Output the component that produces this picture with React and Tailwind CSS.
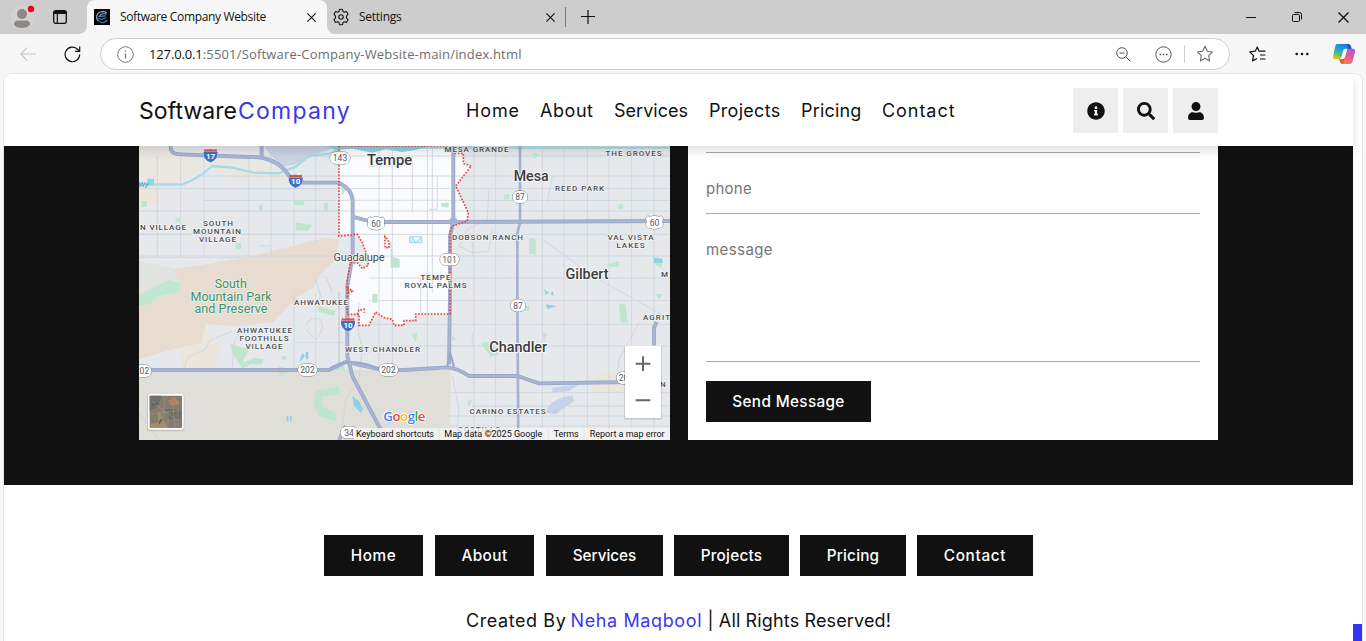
import React from "react";
import { FaInfoCircle, FaSearch, FaUser } from "react-icons/fa";

const ui = { fill: "none", stroke: "#111", strokeWidth: 1.1, strokeLinecap: "round", strokeLinejoin: "round" };

function Favicon() {
  return (
    <svg width="16" height="16" viewBox="0 0 16 16" className="shrink-0">
      <rect width="16" height="16" fill="#050507" />
      <path d="M12.5 4.2C10.5 1.6 5 2 3.3 5.2 2 8 3 10.600 4.600 12" fill="none" stroke="#8aa3bd" strokeWidth="1.300" />
      <path d="M12.600 5.200C10 4 6.500 5 5.200 7.400L11.800 6.800" fill="none" stroke="#5d88b5" strokeWidth="1.200" />
      <path d="M4.500 9C6 11.500 9 10.500 12.500 8.500M5 12.600C8 14.500 12 13.600 13.300 10.800" fill="none" stroke="#3f76ae" strokeWidth="1.200" />
    </svg>
  );
}

function GearIcon() {
  return (
    <svg width="18" height="18" viewBox="0 0 18 18" {...ui} className="shrink-0">
      <path d="M7.400 1.500Q9 1 10.600 1.500L11 3.600 12.300 4.300 14.400 3.600Q15.600 4.800 16 6.300L14.500 8V10L16 11.700Q15.600 13.200 14.400 14.400L12.300 13.700 11 14.400 10.600 16.500Q9 17 7.400 16.500L7 14.400 5.700 13.700 3.600 14.400Q2.400 13.200 2 11.700L3.500 10V8L2 6.300Q2.400 4.800 3.600 3.600L5.700 4.300 7 3.600Z" />
      <circle cx="9" cy="9" r="2.200" />
    </svg>
  );
}

function Close({ size = 9 }) {
  return (
    <svg width={size} height={size} viewBox="0 0 9 9" fill="none" stroke="#111" strokeWidth="1.100">
      <path d="M.4.4l8.200 8.200M8.600.4L.4 8.600" />
    </svg>
  );
}

function Star({ className = "", stroke = "#666" }) {
  return (
    <svg width="18" height="18" viewBox="0 0 18 18" className={className} fill="none" stroke={stroke} strokeWidth="1.050" strokeLinejoin="round">
      <path d="M9 1.300l2.300 4.900 5.200.7-3.800 3.700.9 5.300L9 13.300l-4.600 2.600.9-5.300L1.500 6.900l5.200-.7z" />
    </svg>
  );
}

function Copilot() {
  return (
    <svg width="24" height="22" viewBox="0 0 24 22" className="shrink-0">
      <defs>
        <linearGradient id="cpA" x1=".6" y1="0" x2=".2" y2="1">
          <stop offset="0" stopColor="#1b7fe0" />
          <stop offset=".4" stopColor="#1fa8d8" />
          <stop offset=".7" stopColor="#6cc05a" />
          <stop offset="1" stopColor="#f2c21b" />
        </linearGradient>
        <linearGradient id="cpB" x1=".8" y1="0" x2=".2" y2="1">
          <stop offset="0" stopColor="#a45be8" />
          <stop offset=".5" stopColor="#ee5a8c" />
          <stop offset="1" stopColor="#f98a3c" />
        </linearGradient>
      </defs>
      <path d="M12 1h4.500c1.500 0 2 1 2.400 2.300L20 6.500h-4.500c-1.500 0-2-1-2.300-2z" fill="#174bb8" />
      <path d="M4.800 1h8.500c1.600 0 2.200 1 2.600 2.400l.6 2.400h-2.700c-1.500 0-2.300.9-2.700 2.200L9.400 14c-.6 1.800-1.600 2.300-3 2.300H3.200C1 16.300.6 14.500 1.200 12.500l2-9C3.600 1.900 4 1 4.800 1z" fill="url(#cpA)" />
      <path d="M7 16.300h3.200c1.500 0 2.300-.9 2.700-2.200L14.600 8c.6-1.800 1.600-2.200 3-2.200h3.200c2.200 0 2.700 1.700 2.100 3.700l-2.200 8.500c-.5 2-1.400 3-3.200 3H11c-1.500 0-2.300-.8-2.700-2.200z" fill="url(#cpB)" />
      <path d="M10.300 13.600L12.600 6.900Q13 5.800 14 5.800H15.400L12.800 13.400Q12.500 14.600 11.400 14.600H9.700Z" fill="#f7f7f7" />
      <path d="M7 16.300h3.200c1 0 1.800-.5 2.300-1.300L11 21c-1.500 0-2.300-.8-2.700-2.200z" fill="#e8553c" />
    </svg>
  );
}

function TabBar() {
  return (
    <div className="flex h-[34px] w-full bg-[#cdcdcd] font-['Open_Sans',sans-serif] text-[12px] text-[#111]">
      <div className="h-[34px] w-[87px] bg-[#f7f7f7]">
        <div className="flex h-[34px] rounded-br-lg bg-[#cdcdcd] pt-[5px] pl-[10px]">
          <svg width="26" height="26" viewBox="0 0 26 26">
            <circle cx="12.500" cy="12.500" r="12" fill="#d4d2d0" />
            <circle cx="12" cy="9" r="5" fill="#8c8a88" />
            <path d="M4 19.500Q4 15.500 8 15.500H16Q20 15.500 20 19.500 18 23 12 23T4 19.500Z" fill="#8c8a88" />
            <circle cx="21" cy="4" r="3.200" fill="#e30613" />
          </svg>
          <svg width="14" height="14" viewBox="0 0 14 14" className="mt-[5px] ml-[17px]">
            <rect x=".7" y=".7" width="12.600" height="12.600" rx="2" fill="none" stroke="#111" strokeWidth="1.300" />
            <path d="M1 1H13V4H1Z" fill="#111" />
            <path d="M4.300 4V13" stroke="#111" strokeWidth="1.200" />
          </svg>
        </div>
      </div>
      <div className="flex h-[34px] w-[240px] items-center rounded-t-lg bg-[#f7f7f7] pl-[7px]">
        <Favicon />
        <span className="ml-[10px] w-[187px] whitespace-nowrap tracking-[-0.34px]">Software Company Website</span>
        <Close />
      </div>
      <div className="w-[239px] bg-[#f7f7f7]">
        <div className="flex h-[34px] items-center rounded-bl-lg bg-[#cdcdcd] pl-[5px]">
          <GearIcon />
          <span className="ml-[9px] w-[187px] tracking-[-0.25px]">Settings</span>
          <Close />
        </div>
      </div>
      <div className="mt-[7px] -ml-px h-5 w-px bg-[#777]" />
      <svg width="14" height="14" viewBox="0 0 14 14" className="mt-[10px] ml-[15px]" stroke="#111" strokeWidth="1.200">
        <path d="M7 0V14M0 6.500H14" />
      </svg>
      <div className="ml-auto flex items-center gap-[36px] pr-[17px]">
        <svg width="10" height="10" viewBox="0 0 10 10" stroke="#111"><path d="M0 5.500H10" /></svg>
        <svg width="10" height="10" viewBox="0 0 10 10" fill="none" stroke="#111">
          <rect x=".5" y="2.500" width="7" height="7" rx="1" />
          <path d="M2.500.5H7.500Q9.500.5 9.500 2.500V7.500" />
        </svg>
        <Close size={11} />
      </div>
    </div>
  );
}

function AddressBar() {
  return (
    <div className="flex h-[39px] w-full items-center bg-[#f7f7f7] pt-[1px] font-['Open_Sans',sans-serif]">
      <svg width="16" height="14" viewBox="0 0 16 14" className="ml-5" fill="none" stroke="#c6c6c6" strokeWidth="1.200">
        <path d="M16 7H1M7 .7L.8 7 7 13.300" />
      </svg>
      <svg width="17" height="17" viewBox="0 0 17 17" className="ml-[28px]" fill="none" stroke="#111" strokeWidth="1.200">
        <path d="M15.700 8.500A7.300 7.300 0 1 1 13.800 3.500L15.500 5.200M15.700.5V5.300H11" />
      </svg>
      <div className="ml-[19px] flex h-8 w-[1130px] items-center rounded-full border border-[#cfcfcf] bg-white">
        <svg width="17" height="17" viewBox="0 0 17 17" className="ml-4" fill="none" stroke="#777" strokeWidth="1">
          <circle cx="8.500" cy="8.500" r="7.800" />
          <path d="M8.500 7.500V12.500M8.500 4.500V5.700" strokeWidth="1.300" />
        </svg>
        <span className="ml-[15px] pt-px text-[13px] whitespace-nowrap text-[#111] tracking-[-0.13px]">127.0.0.1</span>
        <span className="w-[583px] pt-px text-[13px] whitespace-nowrap text-[#6d6d6d] tracking-[0.18px]">:5501/Software-Company-Website-main/index.html</span>
        <div className="mr-[15px] ml-auto flex items-center">
          <svg width="15" height="15" viewBox="0 0 15 15" fill="none" stroke="#555" strokeWidth="1">
            <circle cx="6" cy="6" r="5.300" />
            <path d="M10 10L14.500 14.500M3.500 6H8.500" />
          </svg>
          <svg width="17" height="17" viewBox="0 0 17 17" className="ml-[24px]" fill="none" stroke="#555">
            <circle cx="8.500" cy="8.500" r="7.700" />
            <path d="M4.500 8.500h1.600M7.700 8.500h1.600M10.900 8.500h1.600" strokeWidth="1.500" />
          </svg>
          <div className="ml-[12px] h-[18px] w-px bg-[#cfcfcf]" />
          <Star className="ml-[11px]" />
        </div>
      </div>
      <svg width="18" height="18" viewBox="0 0 18 18" className="ml-[19px]" fill="none" stroke="#111" strokeWidth="1.200" strokeLinejoin="round">
        <path d="M10 6.200L8.300 2 6.200 6.200.8 6.900 4.500 10.600 3.500 15.900 8 13.500M10 6.200H16.500M11 10H16.500M11 14H16.500" />
      </svg>
      <svg width="14" height="4" viewBox="0 0 14 4" className="ml-[28px]" fill="#111">
        <circle cx="1.700" cy="2" r="1.300" /><circle cx="7" cy="2" r="1.300" /><circle cx="12.300" cy="2" r="1.300" />
      </svg>
      <div className="ml-[23px]"><Copilot /></div>
    </div>
  );
}

function IconButton({ children }) {
  return <button className="flex size-[45px] items-center justify-center bg-[#eee] text-[18px] text-[#111]">{children}</button>;
}

function Header() {
  return (
    <header className="relative z-10 flex h-[72px] w-full shrink-0 items-center bg-white pt-px pr-[135px] pl-[135px] text-[#111] shadow-[0_5px_10px_rgba(0,0,0,0.12)]">
      <div className="flex w-[327px] text-[23px] leading-[30px]">
        <span className="w-[99px] tracking-[0.06px]">Software</span>
        <span className="tracking-[1.25px] text-[#3d38ec]">Company</span>
      </div>
      <nav className="flex text-[18px] leading-6">
        <a className="w-[74px] tracking-[0.87px]">Home</a>
        <a className="w-[74px] tracking-[0.55px]">About</a>
        <a className="w-[95px] tracking-[0.02px]">Services</a>
        <a className="w-[92px] tracking-[0.3px]">Projects</a>
        <a className="w-[81px] tracking-[0.18px]">Pricing</a>
        <a className="tracking-[0.95px]">Contact</a>
      </nav>
      <div className="ml-auto flex gap-[5px]">
        <IconButton><FaInfoCircle /></IconButton>
        <IconButton><FaSearch /></IconButton>
        <IconButton><FaUser /></IconButton>
      </div>
    </header>
  );
}

const placeLabels = [
  ["MESA GRANDE", 476.500, 152, 64], ["THE GROVES", 633.500, 155.500, 56], ["REED PARK", 579.500, 190.500, 49],
  ["DOBSON RANCH", 487.500, 240, 71], ["VAL VISTA", 630.500, 240, 46], ["LAKES", 630.500, 248, 28],
  ["TEMPE", 435.500, 279.500, 30], ["ROYAL PALMS", 435.500, 287.500, 62], ["SOUTH", 218, 225.500, 30],
  ["MOUNTAIN", 217, 233.500, 48], ["VILLAGE", 217.500, 241.500, 37], ["N VILLAGE", 163, 230, 46],
  ["AHWATUKEE", 321, 304.500, 54], ["AHWATUKEE", 264.500, 332.500, 55], ["FOOTHILLS", 264, 340.500, 49],
  ["VILLAGE", 264, 348.500, 37], ["WEST CHANDLER", 382.500, 351.500, 75], ["CARINO ESTATES", 507.500, 414, 76],
  ["COSTILLO", 479, 432, 43], ["AGRIT", 656.500, 319.500, 27], ["MO", 669, 277, 16], ["N T", 668, 387, 16],
];
const cityLabels = [["Tempe", 389.500, 165, 45], ["Mesa", 531.200, 181, 35], ["Gilbert", 587, 279, 43], ["Chandler", 518.200, 352, 58]];
const routes = [["143", 340, 158, 20], ["87", 520, 197, 15], ["101", 449.500, 259.500, 19], ["87", 518, 305.500, 15], ["202", 142, 371, 19], ["202", 307.500, 370, 19], ["202", 388.500, 370, 19], ["202", 626, 378, 19], ["34", 349, 432.500, 17]];
const roadsV = [55, 125, 195, 330, 396, 465, 530, 720, 760, 865, 1005, 1070, 1210, 1275, 1345, 1410, 1478, 1545];
const roadsH = [30, 90, 128, 163, 195, 265, 330, 396, 464, 535, 600, 740, 810];
const city = "M600 0V270L655 265 670 290 685 330 688 358 670 368 655 350H635L625 400V505H660V538H690L710 498 735 515 760 520 765 538H795V524H830V504H933V260L940 240 985 225 988 200 950 120 997 60 973 52V22H943V0Z";
const freeways = "M95 0Q92 25 125 25L330 33Q400 30 440 75 460 110 500 110H600Q640 130 641 165V330L625 420V630L640 690 725 850M368 0V33M640 212L700 228H943L1593 225M943 0V228L933 270V444L930 655M0 672H570L620 648 730 672H795L925 664Q960 668 990 690H1135L1200 712 1480 708M1545 600V545L1553 528M600 882L620 840";

function MapView() {
  return (
    <svg width="531" height="294" viewBox="0 0 1593 882" className="block shrink-0" fontFamily="Roboto, sans-serif">
      <defs>
        <clipPath id="lowland"><path d="M0 0H1593V882H933V672H0Z" /></clipPath>
      </defs>
      <rect width="1593" height="882" fill="#e6e9ec" />
      <g fill="#ebe5dc">
        <path d="M0 0H95L100 28 330 35 440 80 470 110 320 110 200 60 120 112 0 128Z" opacity=".7" />
        <path d="M0 125L55 120 60 170 0 190ZM120 575L190 530 240 600 230 672H130Z" />
        <path d="M1370 680H1480V740H1360Z" />
      </g>
      <path d="M0 368L100 370 220 352 330 332 450 302 560 275 602 282 590 340 545 385 525 425 480 450 400 530 290 540 200 535 185 592 100 610 0 640Z" fill="#e7dccf" />
      <path d="M0 345L100 365 130 420 90 450 30 460 0 490Z" fill="#e0e3de" />
      <path d="M0 445L40 425 90 402 128 412 118 440 60 450 30 475 0 480Z" fill="#c2e6cf" />
      <path d="M0 672H935V882H0Z" fill="#dfded8" />
      <path d={city} fill="#fafbfc" />
      <path d="M375 0H600L510 32 470 55 430 62 395 28Z" fill="#c8d2e3" />
      <g clipPath="url(#lowland)" fill="none" stroke="#cdd4df" strokeWidth="2.500">
        {roadsV.map((x) => (
          <path key={x} d={x < 600 ? `M${x} 30V${x < 400 ? 335 : 295}M${x > 450 ? x : 600} 440V672` : `M${x} 0V882`} />
        ))}
        {roadsH.map((y) => (
          <path key={y} d={y < 335 ? `M${y > 200 ? 0 : 190} ${y}H1593` : `M690 ${y}H1593`} />
        ))}
        <path d="M0 128H600M0 195H600M0 265H600M0 335H320M135 672L145 635 200 610 210 585 280 555M280 672L285 590 300 560M500 540Q510 510 545 520 560 550 530 580L500 550M360 300H395M470 590H620M880 0V440M820 30V200M845 400V500M690 60H800M895 90V190H870" />
        <path d="M1050 130L1045 220 985 250 960 300 1000 320 1050 315 1060 250M1210 280L1370 395 1593 520M940 690L960 790 950 882M1225 170L1240 90M1500 530L1440 640 1435 700M1000 260V330M935 600H1000V560M935 840H1593M1000 780H1593" />
      </g>
      <g fill="none" stroke="#cbd2df" strokeWidth="2.500">
        <path d="M660 470Q650 560 670 600L660 700 620 760 610 840M0 800L60 882M530 400L545 450 530 480M560 390L580 440M725 845L830 790" />
      </g>
      <g fill="#bfe5cf">
        <path d="M465 163H495V178H465ZM555 170H567V196H555ZM470 230L520 236 505 255 470 252ZM8 165H24V182H8ZM110 215H126V228H110ZM360 176H371V193H360ZM290 292H306V310H290ZM608 120L622 130 608 150ZM750 275L760 300 758 330 782 340V365H755V300ZM535 480L590 495 585 510 540 498ZM275 595L330 610 310 650 350 635 375 640 370 655 335 655 310 668 292 640 280 620ZM420 660L445 668 440 684 420 690Z" />
        <path d="M530 735L600 720V745L550 752V780L590 800V825L540 810 525 780ZM905 172L930 170 928 185 908 182ZM1170 275L1190 280V325H1170ZM1095 145H1110V160H1095ZM1438 175H1452V190H1438ZM1405 355L1440 345V362H1405ZM1540 330L1572 345 1568 365 1545 355ZM1440 475H1460L1466 530H1445ZM818 565L835 560 830 590ZM1025 590L1055 588 1080 625 1055 632ZM1210 560L1225 565 1215 585ZM985 765L1000 762 990 785ZM1180 20L1200 25 1185 40ZM1155 480H1170V495H1155ZM940 570L952 578 940 588ZM1550 444H1572L1560 460ZM427 630H442V641H427ZM700 444H715V470H700Z" />
        <path d="M580 672L610 655 620 675Z" />
      </g>
      <path d="M0 115H130Q175 100 220 60L280 65 345 80 420 82 470 62 510 30 575 22 610 5H1593V0" fill="none" stroke="#a6dbe6" strokeWidth="7" />
      <path d="M560 0H870L830 12 790 18 740 10 700 20 640 8 590 12Z" fill="#91d0de" />
      <path d="M25 98H45V118H25Z" fill="#8ed3ec" />
      <g fill="#93cfe6">
        <path d="M490 620L498 630 480 650ZM500 618H508V640H500ZM640 750L660 765 672 790 665 800 645 780ZM443 810H448V826H443ZM453 810H458V826H453ZM1215 430L1230 440 1220 446ZM1220 475L1255 480 1225 490ZM1545 335L1570 338V350H1545ZM1235 444L1240 435 1245 450ZM690 665L720 660 710 675Z" />
      </g>
      <path d="M812 272H848V290H812ZM820 272L830 290 845 274" fill="#d3eef5" stroke="#9fd8e8" strokeWidth="3" />
      <path d="M1240 725L1320 715 1290 735 1240 740ZM1220 800Q1230 760 1300 748L1305 765 1250 805Z" fill="#c6d2e8" />
      <path d="M1143 0V230L1135 262V444L1138 882" fill="none" stroke="#a5b2d1" strokeWidth="8" />
      <path d={freeways} fill="none" stroke="#97a5c9" strokeWidth="11.500" strokeLinejoin="round" />
      <path d={freeways} fill="none" stroke="#a8b4d2" strokeWidth="7" strokeLinejoin="round" />
      <path d="M568 672Q625 625 730 672M925 660L933 620 945 662" fill="none" stroke="#9ba9cd" strokeWidth="7" />
      <circle cx="943" cy="227" r="13" fill="#a5b2d1" />
      <path d={city} fill="none" stroke="#e8433b" strokeWidth="5" strokeDasharray="5 4.500" />
      <path d="M738 272V305H750V288ZM625 425L640 435 628 440ZM655 505L660 492 675 490V500" fill="none" stroke="#e8433b" strokeWidth="5" strokeDasharray="5 4" />
      <g transform="scale(3) translate(-139 -146)" textAnchor="middle" strokeLinejoin="round" paintOrder="stroke">
        <g fontSize="8" fontWeight="500" fill="#4a4d51" stroke="#f4f5f6" strokeWidth="1.500">
          {placeLabels.map(([t, x, y, w]) => <text key={t + y} x={x} y={y} textLength={w}>{t}</text>)}
        </g>
        <g fontSize="14.300" fontWeight="500" fill="#3a3c40" stroke="#f8f9fa" strokeWidth="2">
          {cityLabels.map(([t, x, y, w]) => <text key={t} x={x} y={y} textLength={w} lengthAdjust="spacingAndGlyphs">{t}</text>)}
        </g>
        <text x="359" y="260.700" fontSize="11" textLength="51" fill="#45484c" stroke="#f8f9fa" strokeWidth="1.500">Guadalupe</text>
        <g fontSize="12" fill="#3d9169" stroke="#f3efe9" strokeWidth="1.500">
          <text x="230.700" y="288" textLength="32" lengthAdjust="spacingAndGlyphs">South</text>
          <text x="231" y="301" textLength="81" lengthAdjust="spacingAndGlyphs">Mountain Park</text>
          <text x="231" y="313.200" textLength="73" lengthAdjust="spacingAndGlyphs">and Preserve</text>
        </g>
        <text x="143.500" y="187" fontSize="8" fill="#3f9fb8" fontStyle="italic">Wy</text>
        {routes.map(([t, x, y, w]) => (
          <g key={t + x + y}>
            <rect x={x - w / 2} y={y - 6} width={w} height="12" rx="6" fill="#fff" stroke="#70757a" strokeWidth=".9" />
            <text x={x} y={y + 3} fontSize="8.500" fill="#55585c">{t}</text>
          </g>
        ))}
        {[[376, 223.500], [654.500, 222.500]].map(([x, y]) => (
          <g key={x}>
            <path d={`M${x - 7} ${y - 6.500}q3 1.500 7-.5 4 2 7 .5l1.500 2.500q-1.500 3 .2 6-1 3.500-4.500 3.600-2.500 0-4.200 1.700-1.700-1.700-4.200-1.700-3.500-.1-4.500-3.600 1.700-3 .2-6z`} fill="#fff" stroke="#70757a" strokeWidth=".9" />
            <text x={x} y={y + 3} fontSize="8.500" fill="#55585c">60</text>
          </g>
        ))}
        {[["17", 210.500, 155.500], ["10", 295.700, 181], ["10", 348, 324.500]].map(([t, x, y]) => (
          <g key={t + x}>
            <path d={`M${x - 6} ${y - 6.500}q3 1 6 0 3 1 6 0l1 4h-14z`} fill="#d9534a" />
            <path d={`M${x - 6.900} ${y - 3.500}h13.800q1.300 7-6.900 10.500-8.200-3.500-6.900-10.500z`} fill="#3f72c4" stroke="#fff" strokeWidth=".6" />
            <text x={x} y={y + 3.400} fontSize="8" fontWeight="700" fill="#fff">{t}</text>
          </g>
        ))}
      </g>
      <g transform="translate(27 744)">
        <rect x="-3" y="0" width="112" height="112" rx="6" fill="#999" opacity=".4" />
        <rect width="107" height="107" rx="6" fill="#fff" />
        <rect x="5" y="5" width="97" height="97" rx="2" fill="#857c6d" />
        <path d="M5 5H40L30 40 5 50ZM50 45H100V75H60Z" fill="#6f6f66" />
        <path d="M60 20L80 8 95 30 70 36ZM8 90L50 82 60 102H8ZM30 50L45 70 30 80Z" fill="#a98b6e" />
        <path d="M62 18L84 12 82 30 68 32Z" fill="#bd7c5c" />
        <path d="M5 62L100 48M50 5L46 102M75 40L82 102M20 30L90 80M10 20L60 60M60 50V100M90 40V100" stroke="#96938a" strokeWidth="2" />
        <path d="M12 34L30 28M34 90L40 76" stroke="#5d6058" strokeWidth="4" />
      </g>
      <text x="733" y="825" fontFamily="Open Sans, sans-serif" fontSize="40" textLength="126" stroke="#fff" strokeWidth="5" paintOrder="stroke" fontWeight="600">
        <tspan fill="#4285f4">G</tspan><tspan fill="#ea4335">o</tspan><tspan fill="#fbbc04">o</tspan><tspan fill="#4285f4">g</tspan><tspan fill="#34a853">l</tspan><tspan fill="#ea4335">e</tspan>
      </text>
      <path d="M644 846H1593V882H644Z" fill="#f5f5f5" opacity=".78" />
      <path d="M901 846V882M1228 846V882M1335 846V882" stroke="#e2e4e6" strokeWidth="3" />
      <g fontSize="27" fill="#111">
        <text x="651" y="872" textLength="234">Keyboard shortcuts</text>
        <text x="916" y="872" textLength="294">Map data ©2025 Google</text>
        <text x="1244" y="872" textLength="75">Terms</text>
        <text x="1352" y="872" textLength="225">Report a map error</text>
      </g>
      <rect x="1455" y="600" width="114" height="221" rx="4" fill="#000" opacity=".12" />
      <rect x="1458" y="599" width="108" height="217" rx="3" fill="#fff" />
      <path d="M1490 653H1534M1512 631V675M1490 763H1534" stroke="#666" strokeWidth="6" />
    </svg>
  );
}

function ContactForm() {
  return (
    <form className="flex h-[294px] w-[530px] flex-col bg-white px-[18px] text-[15px] text-[#757575]">
      <div className="h-[7px] shrink-0 border-b border-[#a9a9a9]" />
      <div className="h-[61px] shrink-0 border-b border-[#a9a9a9] pt-[24px] leading-6 tracking-[0.27px]">phone</div>
      <div className="h-[148px] shrink-0 border-b border-[#a9a9a9] pt-[24px] leading-6 tracking-[0.42px]">message</div>
      <button type="button" className="mt-[19px] h-[41px] w-[165px] shrink-0 bg-[#111] pt-[2px] text-[15.3px] font-[450] tracking-[0.35px] text-white">Send Message</button>
    </form>
  );
}

function FooterButton({ className, children }) {
  return <a className={"flex h-[41px] items-center justify-center bg-[#111] pt-[2px] text-[15.3px] font-[450] text-white " + className}>{children}</a>;
}

function Footer() {
  return (
    <footer className="flex flex-1 flex-col items-start bg-white pt-[50px] text-[#111]">
      <div className="ml-[320px] flex">
        <FooterButton className="w-[99px] tracking-[0.62px]">Home</FooterButton>
        <FooterButton className="ml-3 w-[99px] tracking-[0.44px]">About</FooterButton>
        <FooterButton className="ml-3 w-[117px] tracking-[0px]">Services</FooterButton>
        <FooterButton className="ml-[11px] w-[115px] tracking-[0.25px]">Projects</FooterButton>
        <FooterButton className="ml-[11px] w-[106px] tracking-[0.21px]">Pricing</FooterButton>
        <FooterButton className="ml-[11px] w-[116px] tracking-[0.7px]">Contact</FooterButton>
      </div>
      <p className="mt-[33px] ml-[462px] flex text-[18px] leading-6 whitespace-nowrap">
        <span className="w-[104.5px] tracking-[0.58px]">Created By</span>
        <span className="w-[137px] tracking-[0.62px] text-[#3d38ec]">Neha Maqbool</span>
        <span className="tracking-[0.14px]">| All Rights Reserved!</span>
      </p>
    </footer>
  );
}

export default function App() {
  return (
    <div className="flex h-[641px] w-[1366px] flex-col overflow-hidden bg-[#f7f7f7]">
      <TabBar />
      <AddressBar />
      <div className="ml-[3px] flex h-[568px] w-[1360px] overflow-hidden rounded-t-[9px] border-x border-t border-[#e3e3e3] bg-white font-[Inter,sans-serif]">
        <div className="flex w-[1349px] flex-col">
          <Header />
          <main className="flex h-[339px] shrink-0 items-start gap-[18px] bg-[#111] pl-[135px]">
            <MapView />
            <ContactForm />
          </main>
          <Footer />
        </div>
        <div className="flex flex-1 flex-col justify-end bg-white">
          <div className="h-[17px] bg-[#3333f5]" />
        </div>
      </div>
    </div>
  );
}
